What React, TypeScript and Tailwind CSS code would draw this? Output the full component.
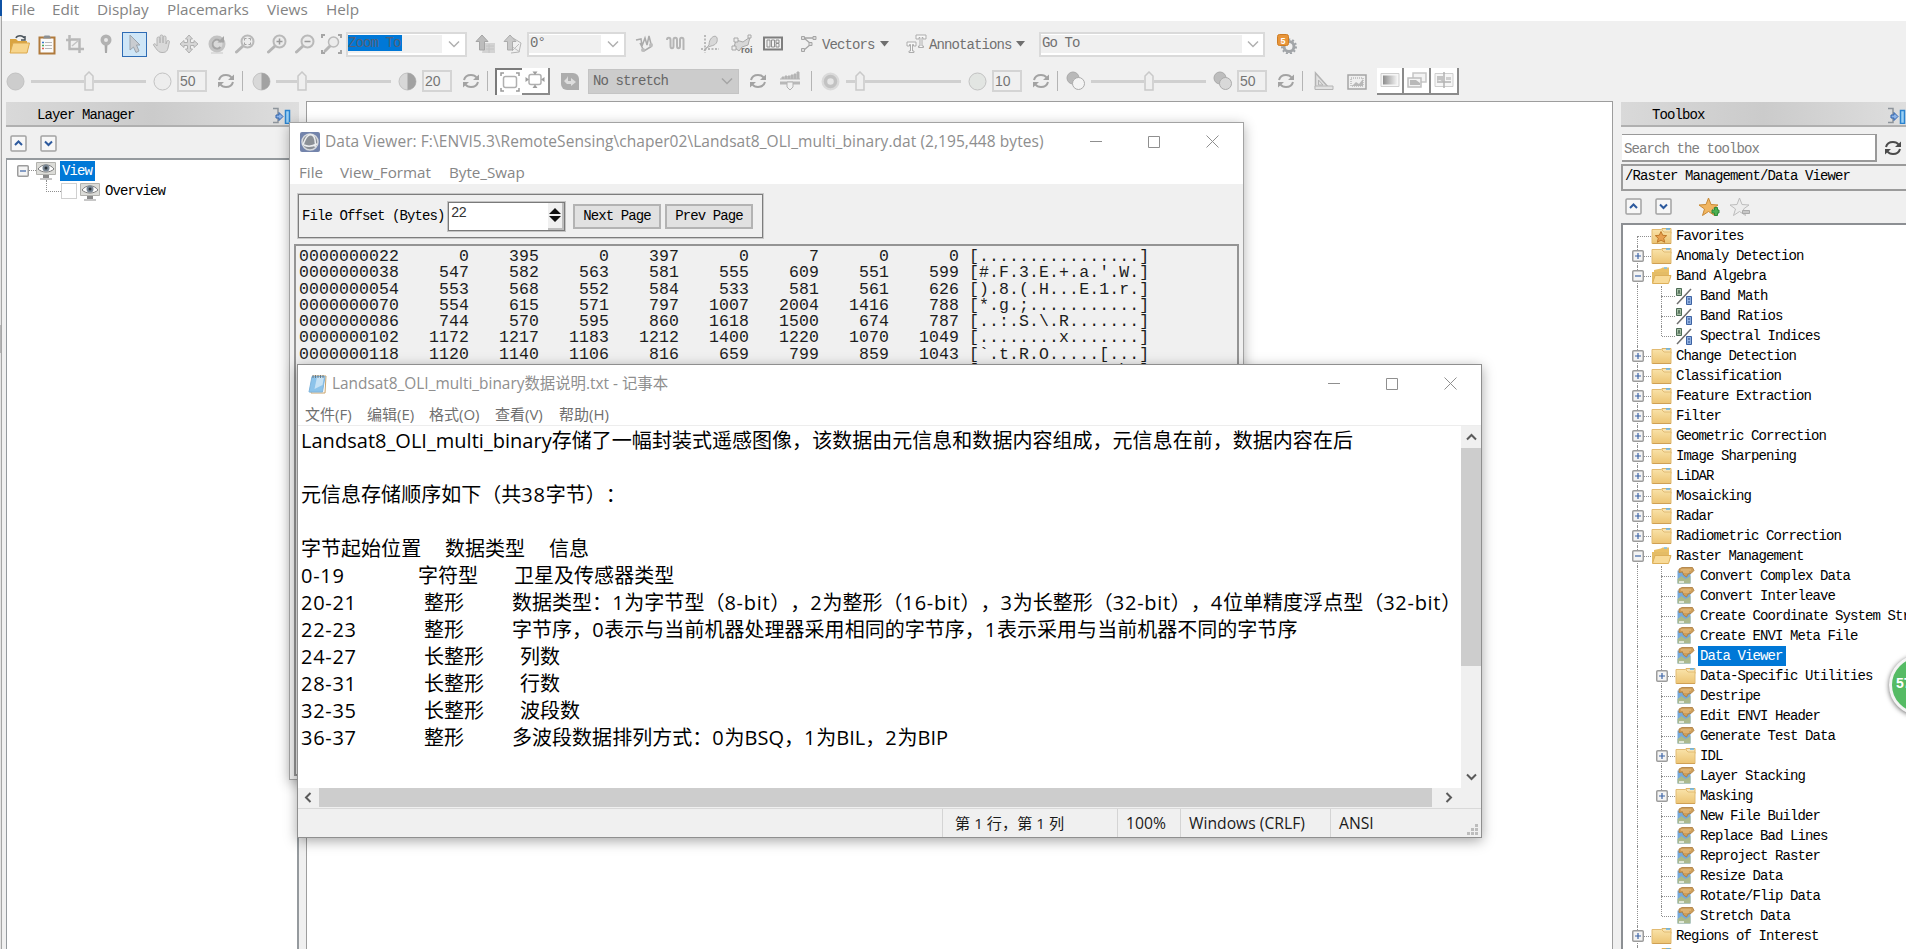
import type { ReactNode } from "react";

// SimSun-style fixed pitch text: every half-width cell is 7.5px
const MONO = "font-['Liberation_Mono',monospace] text-[14px] tracking-[-0.9px] whitespace-pre";
const UI = "font-['Open_Sans','Noto_Sans_CJK_SC',sans-serif] whitespace-pre";

const DUMP = [
  "0000000022      0    395      0    397      0      7      0      0 [................]",
  "0000000038    547    582    563    581    555    609    551    599 [#.F.3.E.+.a.'.W.]",
  "0000000054    553    568    552    584    533    581    561    626 [).8.(.H...E.1.r.]",
  "0000000070    554    615    571    797   1007   2004   1416    788 [*.g.;...........]",
  "0000000086    744    570    595    860   1618   1500    674    787 [..:.S.\\.R.......]",
  "0000000102   1172   1217   1183   1212   1400   1220   1070   1049 [........x.......]",
  "0000000118   1120   1140   1106    816    659    799    859   1043 [`.t.R.O.....[...]",
  "0000000134   1118   1187   1203   1174   1024   1080   1101   1109 [.....O........h.]",
];

type Kind = "fav" | "folder" | "open" | "band" | "tool";
type Node = { label: string; kind: Kind; child?: boolean; last?: boolean; selected?: boolean };

const TREE: Node[] = [
  { label: "Favorites", kind: "fav" },
  { label: "Anomaly Detection", kind: "folder" },
  { label: "Band Algebra", kind: "open" },
  { label: "Band Math", kind: "band", child: true },
  { label: "Band Ratios", kind: "band", child: true },
  { label: "Spectral Indices", kind: "band", child: true, last: true },
  { label: "Change Detection", kind: "folder" },
  { label: "Classification", kind: "folder" },
  { label: "Feature Extraction", kind: "folder" },
  { label: "Filter", kind: "folder" },
  { label: "Geometric Correction", kind: "folder" },
  { label: "Image Sharpening", kind: "folder" },
  { label: "LiDAR", kind: "folder" },
  { label: "Mosaicking", kind: "folder" },
  { label: "Radar", kind: "folder" },
  { label: "Radiometric Correction", kind: "folder" },
  { label: "Raster Management", kind: "open" },
  { label: "Convert Complex Data", kind: "tool", child: true },
  { label: "Convert Interleave", kind: "tool", child: true },
  { label: "Create Coordinate System String", kind: "tool", child: true },
  { label: "Create ENVI Meta File", kind: "tool", child: true },
  { label: "Data Viewer", kind: "tool", child: true, selected: true },
  { label: "Data-Specific Utilities", kind: "folder", child: true },
  { label: "Destripe", kind: "tool", child: true },
  { label: "Edit ENVI Header", kind: "tool", child: true },
  { label: "Generate Test Data", kind: "tool", child: true },
  { label: "IDL", kind: "folder", child: true },
  { label: "Layer Stacking", kind: "tool", child: true },
  { label: "Masking", kind: "folder", child: true },
  { label: "New File Builder", kind: "tool", child: true },
  { label: "Replace Bad Lines", kind: "tool", child: true },
  { label: "Reproject Raster", kind: "tool", child: true },
  { label: "Resize Data", kind: "tool", child: true },
  { label: "Rotate/Flip Data", kind: "tool", child: true },
  { label: "Stretch Data", kind: "tool", child: true, last: true },
  { label: "Regions of Interest", kind: "folder" },
  { label: "", kind: "folder" },
];

function Ico({ className = "", w = 20, h = 20, children }: { className?: string; w?: number; h?: number; children: ReactNode }) {
  return (
    <svg className={`shrink-0 ${className}`} width={w} height={h} viewBox={`0 0 ${w} ${h}`} fill="none">
      {children}
    </svg>
  );
}

/* ---------- small shared drawings ---------- */

function Refresh({ className = "", color = "#a3a3a3" }: { className?: string; color?: string }) {
  return (
    <Ico className={className} w={18} h={16}>
      <path d="M2 7C3 3 6 2 9 2c3 0 4.500 1 5.500 2.500" stroke={color} strokeWidth="2" />
      <path d="M17 1.500V7h-6z" fill={color} />
      <path d="M16 9c-1 4-4 5-7 5-3 0-4.500-1-5.500-2.500" stroke={color} strokeWidth="2" />
      <path d="M1 14.500V9h6z" fill={color} />
    </Ico>
  );
}

function Chevron({ className = "", color = "#b0b0b0" }: { className?: string; color?: string }) {
  return (
    <Ico className={className} w={12} h={8}>
      <path d="M1 1.500l5 5 5-5" stroke={color} strokeWidth="1.500" />
    </Ico>
  );
}

function Sep({ className = "" }: { className?: string }) {
  return <div className={`h-5 w-px shrink-0 bg-[#b4b4b4] ${className}`} />;
}

function Mag({ className = "", children }: { className?: string; children?: ReactNode }) {
  return (
    <Ico className={className}>
      <path d="M8 12l-6.500 6" stroke="#b5b5b5" strokeWidth="3" strokeLinecap="round" />
      <circle cx="12.500" cy="7.500" r="6" fill="#ececec" stroke="#b9b9b9" strokeWidth="2" />
      {children}
    </Ico>
  );
}

function Slider({ className = "", lead }: { className?: string; lead: string }) {
  return (
    <div className={`flex h-[22px] w-[115px] shrink-0 items-center ${className}`}>
      <div className={`h-[3px] bg-[#d0d0d0] ${lead}`} />
      <Ico w={10} h={20}>
        <path d="M1 5l4-4 4 4v14H1z" fill="#efefef" stroke="#c9c9c9" strokeWidth="1.500" />
      </Ico>
      <div className="h-[3px] flex-1 bg-[#d0d0d0]" />
    </div>
  );
}

function NumBox({ className = "", value }: { className?: string; value: string }) {
  return (
    <div className={`flex h-[22px] w-[30px] shrink-0 items-center border-2 border-[#d4d4d4] bg-[#f0f0f0] pt-px pl-px font-['Liberation_Sans',sans-serif] text-[14px] text-[#757575] ${className}`}>
      {value}
    </div>
  );
}

function Dot({ className = "", fill, half }: { className?: string; fill: string; half?: string }) {
  return (
    <Ico className={className} w={19} h={19}>
      <circle cx="9.500" cy="9.500" r="8.500" fill={fill} stroke="#c2c2c2" />
      {half && <path d={half} fill="#a2a2a2" />}
    </Ico>
  );
}

function Combo({ className = "", fieldClass, children }: { className?: string; fieldClass: string; children: ReactNode }) {
  return (
    <div className={`flex h-[25px] shrink-0 items-center border-2 border-[#dadada] bg-white ${className}`}>
      <div className={`h-[18px] bg-[#f0f0f0] leading-[16px] text-[#717171] ${MONO} ${fieldClass}`}>{children}</div>
      <div className="flex flex-1 justify-center">
        <Chevron />
      </div>
    </div>
  );
}

/* ---------- toolbars ---------- */

function MainToolbar() {
  return (
    <div className="flex h-[46px] items-center">
      <Ico className="ml-[7px]" w={21}>
        <path d="M7 4c1-3 7-3 8 0m1-2v4h-4" stroke="#4a545c" strokeWidth="1.500" />
        <path d="M1 5h6l2 2h9v12H1z" fill="#d9a441" />
        <path d="M4 9h16.500L18 19H1z" fill="#f7d58c" stroke="#dba84c" />
      </Ico>
      <Ico className="ml-2" w={18} h={21}>
        <path d="M1.500 3.500h15v16h-15z" fill="#fbfbfb" stroke="#b07a3c" strokeWidth="2" />
        <path d="M5 4.500l1.500-3h5l1.500 3z" fill="#8a8f94" />
        <path d="M7 8.500h7M7 11.500h7M7 14.500h7" stroke="#b9b9b9" />
        <path d="M4 8.500h2" stroke="#3a78c8" strokeWidth="1.500" />
        <path d="M4 11.500h2" stroke="#4aa65a" strokeWidth="1.500" />
        <path d="M4 14.500h2" stroke="#e06050" strokeWidth="1.500" />
      </Ico>
      <Ico className="ml-[9px]">
        <path d="M1 6h5M4.500 1v14H19M6 5.500h8.500V19" stroke="#b8b8b8" strokeWidth="2.500" />
        <path d="M7 12l7-6" stroke="#c4c4c4" strokeWidth="1.500" />
      </Ico>
      <Ico className="ml-[14px]" w={14}>
        <path d="M5.500 10h3L8 19H6z" fill="#a8a8a8" />
        <circle cx="7" cy="6" r="5.500" fill="#b2b2b2" />
        <circle cx="7" cy="6" r="2" fill="#e8e8e8" />
      </Ico>
      <div className="ml-[9px] flex h-[25px] w-[25px] shrink-0 items-center justify-center border border-[#2e6cb5] bg-[#cfe6f7]">
        <Ico w={14}>
          <path d="M2 1l10 10H8.500l2.500 6-3 1.500L5.500 13 2 16z" fill="#c9ccd0" stroke="#9aa3ab" />
        </Ico>
      </div>
      <Ico className="ml-[5px]" w={19}>
        <path d="M5 12V4.500a1.500 1.500 0 013 0V9 2.500a1.500 1.500 0 013 0V9 3.500a1.500 1.500 0 013 0V10l1-3a1.500 1.500 0 012.500.5L16 14c-1 4-3 4.500-6 4.500S6 17 4 14.500L1.500 11c0-2 2-1.500 3.500 1z" fill="#d9d9d9" stroke="#b4b4b4" />
      </Ico>
      <Ico className="ml-[8px]">
        <path d="M10 1l3.500 4h-2v3.500H15v-2L19 10l-4 3.500v-2h-3.500V15h2L10 19l-3.500-4h2v-3.500H5v2L1 10l4-3.500v2h3.500V5h-2z" fill="#d6d6d6" stroke="#b0b0b0" />
      </Ico>
      <Ico className="ml-[8px]">
        <circle cx="10" cy="10" r="7" fill="#dadada" stroke="#c3c3c3" strokeWidth="3" />
        <path d="M14 8A4.500 4.500 0 1013.500 13" stroke="#a6a6a6" strokeWidth="2" />
        <path d="M17 2v6.500h-6.500z" fill="#a6a6a6" />
        <path d="M4 19h12" stroke="#c8c8c8" />
      </Ico>
      <Mag className="ml-[8px]">
        <path d="M9.500 6.500v-2h2m2 0h2v2m0 2v2h-2m-2 0h-2v-2" stroke="#a3a3a3" />
      </Mag>
      <Mag className="ml-[12px]">
        <path d="M12.500 4.500v6m-3-3h6" stroke="#9b9b9b" strokeWidth="1.500" />
      </Mag>
      <Mag className="ml-[8px]">
        <path d="M9.500 7.500h6" stroke="#9b9b9b" strokeWidth="1.500" />
      </Mag>
      <Ico className="ml-[6px]" w={21}>
        <path d="M1 4V1h3M17 1h3v3M20 16v3h-3M4 19H1v-3" stroke="#a5a5a5" strokeWidth="2" />
        <path d="M9 12l-5 5" stroke="#b5b5b5" strokeWidth="3" strokeLinecap="round" />
        <circle cx="12.500" cy="8" r="5" fill="#ececec" stroke="#b9b9b9" strokeWidth="1.500" />
      </Ico>
      <Combo className="ml-[4px] w-[121px]" fieldClass="w-[94px]">
        <span className="inline-block h-[16px] w-[54px] bg-[#0078d7] align-top leading-[16px] text-[#51617a]">Zoom To</span>
      </Combo>
      <Ico className="ml-[8px]">
        <path d="M9 9h11v10H7z" fill="#d3d3d3" />
        <path d="M7 1l6 6.500H9.500V16h-5V7.500H1z" fill="#bcbcbc" stroke="#a5a5a5" />
        <path d="M11 12h8m-8 3h8m-5-5v9" stroke="#c4c4c4" />
      </Ico>
      <Ico className="ml-[8px]">
        <path d="M10 4l8 5-2 9-8 1" stroke="#b5b5b5" />
        <path d="M9 17l7-7m-8 2l9 6" stroke="#bdbdbd" />
        <path d="M7 1l6 6.500H9.500V16h-5V7.500H1z" fill="#c9c9c9" stroke="#acacac" />
      </Ico>
      <Combo className="ml-[4px] w-[99px]" fieldClass="w-[72px] pl-px">
        0°
      </Combo>
      <Ico className="ml-[9px]">
        <path d="M1 6l5-1 1 7 3-8 2 7 2-9 2 8M5 9l4 8 8-5" stroke="#ababab" strokeWidth="1.500" />
        <circle cx="8" cy="16" r="2" fill="#bdbdbd" />
        <circle cx="16" cy="11" r="2" fill="#bdbdbd" />
      </Ico>
      <Ico className="ml-[11px]">
        <path d="M1 6c0-3 3.500-3 3.500 0v6c0 3 3 3 3 0V6c0-3 3.500-3 3.500 0v6c0 3 3 3 3 0V6c0-3 3.500-3 3.500 0v10" stroke="#b5b5b5" strokeWidth="2" />
      </Ico>
      <Ico className="ml-[14px]">
        <path d="M5 1v18M1 15h18" stroke="#a8a8a8" strokeWidth="1.500" strokeDasharray="2 1.500" />
        <path d="M4 17C6 14 8 13 11 12c5-1 7-4 6-8s-8-1-8 7c-2 2-4 4-5 6z" fill="#d8d8d8" stroke="#b0b0b0" />
      </Ico>
      <Ico className="ml-[11px]" w={22}>
        <path d="M3 13l2-7 7 2 7-5-2 8-6 2-3 4z" fill="#d8d8d8" stroke="#a8a8a8" />
        <path d="M1 12h4v4H1zM3 4h4v4H3zM17 1h3v3h-3z" fill="#eee" stroke="#a8a8a8" />
        <text x="10" y="19" fontSize="9" fontWeight="700" fill="#6d6d6d" fontFamily="Liberation Sans">roi</text>
      </Ico>
      <Ico className="ml-[10px]">
        <path d="M1 3.500h18v12H1z" fill="#f2f2f2" stroke="#7e7e7e" strokeWidth="2" />
        <path d="M4 6h3v7H4zM8.500 6h3v7h-3zM13 6h3v3h-3zM13 9.500h3V13h-3z" stroke="#8e8e8e" />
      </Ico>
      <Ico className="ml-[17px]" w={18}>
        <path d="M3 4h11M4 4l7 6-7 6" stroke="#a5a5a5" strokeWidth="1.300" />
        <path d="M1.500 2.500h3v3h-3zM13 2.500h3v3h-3zM9 8.500h3v3H9zM1.500 14.500h3v3h-3z" fill="#dcdcdc" stroke="#a5a5a5" />
      </Ico>
      <span className={`ml-[4px] w-[53px] pt-[3px] text-[#707070] ${MONO}`}>Vectors</span>
      <Ico className="ml-[5px]" w={9} h={6}>
        <path d="M0 0h9L4.500 5.500z" fill="#6f6f6f" />
      </Ico>
      <Ico className="ml-[17px]" w={21}>
        <path d="M10 1h10v4h-3V3.500h-1V12h1.500v1.500h-5V12H14V3.500h-1V5h-3z" fill="#f8f8f8" stroke="#adadad" />
        <path d="M1 8h9v4H7.500v-1.500H6.500V17H8v1.500H3V17h1.500v-6.500h-1V12H1z" fill="#f8f8f8" stroke="#adadad" />
      </Ico>
      <span className={`ml-[2px] w-[83px] pt-[3px] text-[#707070] ${MONO}`}>Annotations</span>
      <Ico className="ml-[4px]" w={9} h={6}>
        <path d="M0 0h9L4.500 5.500z" fill="#6f6f6f" />
      </Ico>
      <Combo className="ml-[14px] w-[226px]" fieldClass="w-[201px] pl-px">
        Go To
      </Combo>
      <Ico className="ml-[12px]">
        <circle cx="12" cy="12.500" r="5" stroke="#a2a5a8" strokeWidth="3" />
        <circle cx="12" cy="12.500" r="7" stroke="#9ea2a6" strokeWidth="2" strokeDasharray="2 2" />
        <rect x="0.500" y="0.500" width="11" height="11" rx="2" fill="#e8953a" stroke="#cf7c22" />
        <text x="3.500" y="9.500" fontSize="9" fontWeight="700" fill="#fff" fontFamily="Liberation Sans">5</text>
      </Ico>
    </div>
  );
}

function DisplayToolbar() {
  return (
    <div className="flex h-[28px] items-center">
      <Dot className="ml-[4px]" fill="#cdcdcd" />
      <Slider className="ml-[6px]" lead="w-[53px]" />
      <Dot className="ml-[7px]" fill="#ededed" />
      <NumBox className="ml-[5px]" value="50" />
      <Refresh className="ml-[10px]" />
      <Sep className="ml-[7px]" />
      <Dot className="ml-[9px]" fill="#d8d8d8" half="M9.500 1a8.500 8.500 0 010 17z" />
      <Slider className="ml-[5px]" lead="w-[21px]" />
      <Dot className="ml-[7px]" fill="#d8d8d8" half="M9.500 1a8.500 8.500 0 010 17z" />
      <NumBox className="ml-[5px]" value="20" />
      <Refresh className="ml-[10px]" />
      <Sep className="ml-[7px]" />
      <div className="ml-[7px] flex h-[27px] w-[27px] shrink-0 items-center justify-center border-t-2 border-l-2 border-[#7b7b7b] bg-white">
        <Ico>
          <path d="M1 4V1h3M16 1h3v3M19 16v3h-3M4 19H1v-3" stroke="#9a9a9a" strokeWidth="1.500" />
          <rect x="3.500" y="4.500" width="13" height="11" rx="2" stroke="#b0b0b0" strokeWidth="1.500" />
        </Ico>
      </div>
      <div className="flex h-[27px] w-[28px] shrink-0 items-center justify-center border-r-2 border-b-2 border-[#8b8b8b] bg-white">
        <Ico>
          <rect x="4" y="4.500" width="12" height="10" rx="2" stroke="#b0b0b0" strokeWidth="1.500" />
          <path d="M10 5L7.500 1.500h5zM10 14.500L7.500 18h5zM4 9.500L.500 7v5zM16 9.500l3.500-2.500v5z" fill="#9d9d9d" />
        </Ico>
      </div>
      <Ico className="ml-[10px]">
        <path d="M1 2h12a6 6 0 016 6v11H7a6 6 0 01-6-6z" fill="#adadad" />
        <path d="M8 5v5h3V7l5 4-5 4v-2H7l-3-3 3-3z" fill="#dedede" />
      </Ico>
      <div className="ml-[8px] flex h-[25px] w-[151px] shrink-0 items-center justify-between border border-[#c4c4c4] bg-[#cccccc] pr-[5px] pl-[4px]">
        <span className={`text-[#666] ${MONO}`}>No stretch</span>
        <Chevron color="#a5a5a5" />
      </div>
      <Refresh className="ml-[10px]" />
      <Ico className="ml-[12px]" w={22}>
        <path d="M1 8h20M3 8V6h2v2m1 0V5h2v3m1 0V5h2v3m1 0V4h2v4m1 0V3h2v5m1 0V1h2v7" fill="#b4b4b4" stroke="#b4b4b4" />
        <path d="M1 12h20" stroke="#b8b8b8" strokeWidth="3" />
        <path d="M8 11h6v5l-3 3-3-3z" fill="#f1f1f1" stroke="#b2b2b2" />
      </Ico>
      <Sep className="ml-[10px]" />
      <Ico className="ml-[9px]" w={19} h={19}>
        <circle cx="9.500" cy="9.500" r="7.500" stroke="#dadada" strokeWidth="3" />
        <circle cx="9.500" cy="9.500" r="5" stroke="#c2c2c2" strokeWidth="3.500" fill="#e6e6e6" />
      </Ico>
      <Slider className="ml-[6px]" lead="w-[9px]" />
      <Dot className="ml-[7px]" fill="#e2e5e2" />
      <NumBox className="ml-[5px]" value="10" />
      <Refresh className="ml-[10px]" />
      <Sep className="ml-[7px]" />
      <Ico className="ml-[8px]">
        <circle cx="7" cy="7" r="6" fill="#b9b9b9" stroke="#a9a9a9" />
        <circle cx="12.500" cy="12.500" r="6" fill="#f4f4f4" stroke="#ababab" />
      </Ico>
      <Slider className="ml-[5px]" lead="w-[53px]" />
      <Ico className="ml-[7px]">
        <circle cx="7" cy="7" r="6" fill="#bdbdbd" stroke="#a9a9a9" />
        <circle cx="12.500" cy="12.500" r="6" fill="#d8d8d8" stroke="#ababab" />
      </Ico>
      <NumBox className="ml-[4px]" value="50" />
      <Refresh className="ml-[10px]" />
      <Sep className="ml-[7px]" />
      <Ico className="ml-[11px]">
        <path d="M1.500 2v15H15z" fill="#e2e2e2" stroke="#b4b4b4" strokeWidth="1.500" />
        <path d="M4.500 9v5H9z" stroke="#b4b4b4" />
        <path d="M1 15h18v3.500H1z" fill="#e2e2e2" stroke="#b4b4b4" />
      </Ico>
      <Ico className="ml-[13px]">
        <path d="M1 4h18v14H1z" fill="#efefef" stroke="#a5a5a5" strokeWidth="1.500" />
        <path d="M4 7h12v8H4z" stroke="#9e9e9e" strokeDasharray="1 1" />
        <path d="M5 15l4-4 3 2 4-5v7z" fill="#b8b8b8" />
      </Ico>
      <div className="ml-[10px] flex h-[27px] w-[82px] shrink-0 bg-white">
        <div className="flex w-[27px] items-center justify-center border-r-2 border-b-2 border-[#8b8b8b]">
          <Ico>
            <defs>
              <linearGradient id="fade">
                <stop stopColor="#8d8d8d" />
                <stop offset="1" stopColor="#f2f2f2" />
              </linearGradient>
            </defs>
            <path d="M1 3.500h18v13H1z" stroke="#cfcfcf" fill="#f6f6f6" />
            <path d="M3 5.500h14v9H3z" fill="url(#fade)" />
          </Ico>
        </div>
        <div className="flex w-[27px] items-center justify-center border-r-2 border-b-2 border-[#8b8b8b]">
          <Ico>
            <path d="M6 3h13v9H6z" fill="#f3f3f3" stroke="#c6c6c6" strokeWidth="1.500" />
            <path d="M1 8h13v9H1z" fill="#f3f3f3" stroke="#bfbfbf" strokeWidth="1.500" />
            <path d="M3 10h6l4 3v2H3z" fill="#b9b9b9" />
          </Ico>
        </div>
        <div className="flex w-[28px] items-center justify-center border-r-2 border-b-2 border-[#8b8b8b]">
          <Ico>
            <path d="M1 3.500h18v13H1z" stroke="#cfcfcf" fill="#f6f6f6" />
            <path d="M3 6h6v6l-3-2-3 1z" fill="#c4c4c4" />
            <path d="M10 2v16M3 12h14" stroke="#b3b3b3" strokeWidth="1.500" />
            <path d="M12 7h5v3h-5z" fill="#cfcfcf" />
          </Ico>
        </div>
      </div>
    </div>
  );
}

/* ---------- side panels ---------- */

function PanelHeader({ title, className }: { title: string; className: string }) {
  return (
    <div className={`flex h-[25px] shrink-0 items-center border-b-2 border-[#b0b0b0] bg-linear-to-r from-[#d9d9d9] via-[#cbcbcb] to-[#dedede] pt-[3px] ${className}`}>
      <span className={`flex-1 text-black ${MONO}`}>{title}</span>
      <Ico w={19} h={17}>
        <path d="M1 1.500h5v14H1" stroke="#8d949b" strokeWidth="1.500" />
        <path d="M4 8h3V5.500L11 9.500l-4 4V11H4z" fill="#8db4e8" stroke="#2f62ad" />
        <path d="M13.500 3.500h4v13h-4z" fill="#9bd0f5" stroke="#2b83cf" strokeWidth="1.500" />
      </Ico>
    </div>
  );
}

function MiniButton({ down, className = "" }: { down?: boolean; className?: string }) {
  return (
    <Ico className={className} w={17} h={17}>
      <rect x="1" y="1" width="15" height="15" rx="1" fill="#f7f7f7" stroke="#a3a3a3" strokeWidth="1.500" />
      <path d={down ? "M5 6.500l3.500 3.500L12 6.500" : "M5 10l3.500-3.500L12 10"} stroke="#2d5a9e" strokeWidth="2" />
    </Ico>
  );
}

function Expander({ open }: { open?: boolean }) {
  return (
    <Ico w={12} h={12}>
      <rect x="0.750" y="0.750" width="10.500" height="10.500" rx="1" fill="#f4f4f4" stroke="#9c9c9c" strokeWidth="1.500" />
      <path d={open ? "M3 6h6" : "M3 6h6M6 3v6"} stroke="#3b63a5" strokeWidth="1.200" />
    </Ico>
  );
}

function EyeMonitor() {
  return (
    <Ico w={20} h={19}>
      <path d="M.500 1.500h19v12H.500z" fill="#dcdcd8" stroke="#b2b2ae" />
      <path d="M2 8c4-5.500 12-5.500 16 0-4 4-12 4-16 0z" fill="#fff" stroke="#7c7c7c" />
      <circle cx="10" cy="7" r="3.500" fill="#7a8794" />
      <circle cx="10" cy="7" r="1.500" fill="#2d3338" />
      <path d="M7 14h6v3H7z" fill="#8a8a8a" />
      <path d="M4 18h12" stroke="#b5b5b5" strokeWidth="1.500" />
    </Ico>
  );
}

function NodeIcon({ kind }: { kind: Kind }) {
  if (kind === "band") {
    return (
      <Ico w={20} h={18}>
        <path d="M1.500 1.500h5v7h-5z" fill="#a9c2a9" stroke="#4c6b55" />
        <path d="M3 7l1-4 1 4" stroke="#3f5c48" strokeWidth=".8" />
        <path d="M16 2L2 17" stroke="#6d6d6d" strokeWidth="1.500" />
        <path d="M11.500 9.500h5v8h-5z" fill="#8fb0e0" stroke="#3d62a3" />
        <path d="M13 12h2m-2 3h2" stroke="#2f4f8c" />
      </Ico>
    );
  }
  if (kind === "tool") {
    return (
      <Ico w={20} h={18}>
        <path d="M2.500 3.500h13v13h-13z" fill="#74a9dc" />
        <path d="M2.500 16.500V12l4-3 4 3 5-3v7.500z" fill="#a9b98e" />
        <path d="M4 14h5v2H4z" fill="#dfe7d8" />
        <path d="M4 2l3-1.500h10.500l1.500 3-3 3-3 .500-1.500 3-3-2-1-3L4 5.500z" fill="#cf9f5b" stroke="#a87a3b" strokeWidth=".8" />
        <path d="M6 3h10M8 5h6" stroke="#e7c48b" />
      </Ico>
    );
  }
  if (kind === "open") {
    return (
      <Ico w={21} h={18}>
        <path d="M3 3l7-1.500 1.500-1H18V9H3z" fill="#e9c067" />
        <path d="M13 1h3" stroke="#7bc1ee" strokeWidth="1.500" />
        <path d="M1 5h16v11H1z" fill="#e4bc66" />
        <path d="M4 8.500h16L17.500 16.500H1.500z" fill="#f8da97" stroke="#ddb05a" />
      </Ico>
    );
  }
  return (
    <Ico w={21} h={18}>
      <defs>
        <linearGradient id="manila" x1="0" y1="0" x2="0" y2="1">
          <stop stopColor="#f9e2a8" />
          <stop offset="1" stopColor="#ecc474" />
        </linearGradient>
      </defs>
      <path d="M11 1.500h9v5h-9z" fill="#f6e3b4" stroke="#ddb262" />
      <path d="M15 2h4" stroke="#5cb2ee" strokeWidth="1.500" />
      <path d="M1 2.500h9.500L13 5h7v11.500H1z" fill="url(#manila)" stroke="#e2bb72" />
      <path d="M1.500 16.500h18.500" stroke="#cfa054" />
      {kind === "fav" && <path d="M10 4.500l1.700 3.800 4 .3-3 2.700 1 4-3.700-2.200-3.700 2.200 1-4-3-2.700 4-.3z" fill="#e8a050" stroke="#c07a2a" />}
    </Ico>
  );
}

function TreeRow({ node, first }: { node: Node; first: boolean }) {
  const hasBox = node.kind === "folder" || node.kind === "open";
  const dots = "border-dotted border-[#8f8f8f]";
  return (
    <div className="flex h-5 shrink-0 items-stretch">
      {node.child && (
        <div className="flex w-[24px] shrink-0 pl-[14px]">
          <div className={`border-l ${dots}`} />
        </div>
      )}
      {/* rail above and below the expander */}
      <div className="flex w-[15px] shrink-0 flex-col items-end">
        <div className={`h-[10px] ${first ? "" : `border-l ${dots}`}`} />
        <div className={`h-[10px] ${node.last ? "" : `border-l ${dots}`}`} />
      </div>
      <div className="-ml-[6px] flex w-[19px] shrink-0 items-center">
        {hasBox ? <Expander open={node.kind === "open"} /> : <div className="w-[6px]" />}
        <div className={`h-0 flex-1 border-t ${dots}`} />
      </div>
      <div className="flex w-[23px] shrink-0 items-center">
        <NodeIcon kind={node.kind} />
      </div>
      <span
        className={`h-5 shrink-0 pr-[3px] pl-[2px] leading-[21px] ${MONO} ${node.selected ? "bg-[#0078d7] text-white" : "text-black"}`}
      >
        {node.label}
      </span>
    </div>
  );
}

function LayerManager() {
  return (
    <div className="flex w-[293px] shrink-0 flex-col">
      <PanelHeader title="Layer Manager" className="pr-[8px] pl-[31px]" />
      <div className="flex h-[31px] items-center pt-[2px] pl-[4px]">
        <MiniButton />
        <MiniButton down className="ml-[13px]" />
      </div>
      <div className="flex-1 border-t-2 border-r-2 border-l border-[#959a9e] bg-white">
        <div className="flex h-5 items-center pt-px pl-[10px]">
          <Expander open />
          <div className="h-0 w-[7px] border-t border-dotted border-[#8f8f8f]" />
          <EyeMonitor />
          <span className={`ml-[4px] h-5 w-[35px] bg-[#0078d7] pl-[2px] leading-[20px] text-white ${MONO}`}>View</span>
        </div>
        <div className="flex h-[21px] items-center pt-px pl-[39px]">
          <div className="-mt-[10px] h-[12px] w-[15px] border-b border-l border-dotted border-[#8f8f8f]" />
          <div className="h-4 w-4 border border-[#d0d0d0] bg-white" />
          <div className="ml-[3px]">
            <EyeMonitor />
          </div>
          <span className={`ml-[5px] text-black ${MONO}`}>Overview</span>
        </div>
      </div>
    </div>
  );
}

function Toolbox() {
  return (
    <div className="flex w-[285px] shrink-0 flex-col">
      <PanelHeader title="Toolbox" className="pl-[31px]" />
      <div className="mt-[7px] flex h-[28px] items-center">
        <div className={`ml-px flex h-[28px] w-[255px] shrink-0 items-center border-t border-r-2 border-b-2 border-[#999] bg-white pt-[3px] pl-[2px] text-[#808080] ${MONO}`}>
          Search the toolbox
        </div>
        <Refresh className="ml-[7px]" color="#4b4b4b" />
      </div>
      <div className={`mt-[2px] flex h-[27px] items-center border-2 border-r-0 border-[#9b9b9b] pb-[3px] pl-[2px] text-black ${MONO}`}>
        /Raster Management/Data Viewer
      </div>
      <div className="flex h-[31px] items-center pl-[4px]">
        <MiniButton />
        <MiniButton down className="ml-[13px]" />
        <Ico className="ml-[27px]" w={21}>
          <path d="M9.500 1l2.500 6.500 7 .5-5.500 4 2 6.500-6-4-6 4 2-6.500L0 8l7-.5z" fill="#f0b561" stroke="#c98a35" />
          <path d="M13 13h2.500v-2.500h3V13H20v3h-1.500v2.500h-3V16H13z" fill="#4caf50" stroke="#2f8a3a" />
        </Ico>
        <Ico className="ml-[10px]" w={21}>
          <path d="M9.500 1l2.500 6.500 7 .5-5.500 4 2 6.500-6-4-6 4 2-6.500L0 8l7-.5z" fill="#ededed" stroke="#bdbdbd" />
          <path d="M12.500 13.500h7v3h-7z" fill="#c7c7c7" stroke="#a9a9a9" />
        </Ico>
      </div>
      <div className="mt-px flex min-h-0 flex-1 flex-col overflow-hidden border-t-2 border-l-2 border-[#8c8f93] bg-white pt-px">
        {TREE.map((node, i) => (
          <TreeRow key={i} node={node} first={i === 0} />
        ))}
      </div>
    </div>
  );
}

/* ---------- floating windows ---------- */

function WindowControls() {
  return (
    <div className="flex items-center gap-[46px]">
      <Ico w={12} h={12}>
        <path d="M0 5.500h12" stroke="#8f8f8f" />
      </Ico>
      <Ico w={12} h={12}>
        <path d="M.500.500h11v11H.500z" stroke="#8f8f8f" />
      </Ico>
      <Ico w={13} h={13}>
        <path d="M.500.500l12 12M12.500.500l-12 12" stroke="#8f8f8f" />
      </Ico>
    </div>
  );
}

function DataViewer() {
  return (
    <div className="absolute top-[122px] left-[289px] flex h-[658px] w-[955px] flex-col border border-[#a3a3a3] bg-[#f0f0f0] shadow-[0_3px_12px_rgba(0,0,0,0.3)]">
      <div className="flex h-[37px] items-center bg-white pr-[24px] pl-[10px]">
        <Ico w={20}>
          <rect width="20" height="20" rx="2" fill="#7384ab" />
          <circle cx="10" cy="10" r="8" fill="#8b9096" stroke="#d7dade" strokeWidth="1.500" />
          <path d="M3 13C6 4 9 2 12 3s4 8 3 12M4 13c4 2 9 1 13-1" stroke="#eceef0" strokeWidth="1.500" />
        </Ico>
        <span className={`ml-[5px] flex-1 text-[15.500px] tracking-[0.06px] text-[#8e8e8e] ${UI}`}>
          Data Viewer: F:\ENVI5.3\RemoteSensing\chaper02\Landsat8_OLI_multi_binary.dat (2,195,448 bytes)
        </span>
        <WindowControls />
      </div>
      <div className={`flex h-[24px] items-center bg-white text-[15.200px] text-[#868686] ${UI}`}>
        <span className="w-[50px] pl-[9px]">File</span>
        <span className="w-[109px]">View_Format</span>
        <span>Byte_Swap</span>
      </div>
      <div className="mt-[10px] ml-[8px] flex h-[44px] w-[465px] items-center border border-[#7d7d7d] pl-[3px] outline outline-[#c9c9c9]">
        <span className={`w-[146px] text-black ${MONO}`}>File Offset (Bytes)</span>
        <div className="flex h-[29px] w-[117px] border border-[#7a7a7a] bg-white outline outline-[#c4c4c4]">
          <span className={`flex-1 pl-[2px] leading-[20px] text-[#333] ${MONO}`}>22</span>
          <div className="flex w-[16px] items-center justify-center border-r-2 border-b-2 border-[#bdbdbd] bg-[#f0f0f0]">
            <Ico w={12} h={14}>
              <path d="M0 6l6-6 6 6zM0 8h12l-6 6z" fill="#111" />
            </Ico>
          </div>
        </div>
        <div className={`ml-[8px] flex h-[25px] w-[88px] items-center justify-center border-2 border-[#b3b3b3] bg-[#e1e1e1] text-black ${MONO}`}>Next Page</div>
        <div className={`ml-[4px] flex h-[25px] w-[88px] items-center justify-center border-2 border-[#b3b3b3] bg-[#e1e1e1] text-black ${MONO}`}>Prev Page</div>
      </div>
      <div className="mt-[6px] mr-[4px] mb-[3px] ml-[4px] flex-1 overflow-hidden border-2 border-[#949494] bg-[#f0f0f0] pt-[3px] pl-[3px]">
        {DUMP.map((line) => (
          <div key={line} className="h-[16.27px] font-['Liberation_Mono',monospace] text-[16.500px] leading-[16px] tracking-[0.1px] whitespace-pre text-[#1c1c1c]">
            {line}
          </div>
        ))}
      </div>
    </div>
  );
}

// Numbers are set a little wider than the surrounding text
function Note({ text }: { text: string }) {
  return (
    <>
      {text.split(/(\d[\d-]*(?:bit)?)/).map((part, i) =>
        i % 2 ? (
          <span key={i} className="tracking-[0.7px]">{part}</span>
        ) : (
          part
        ),
      )}
    </>
  );
}

// Columns of the notepad text; widths follow the runs of spaces in the file
function NoteRow({ a, b, c, aw, bw }: { a: string; b: string; c: string; aw: string; bw: string }) {
  return (
    <div className="flex h-[27px]">
      <span className={`shrink-0 ${aw}`}><Note text={a} /></span>
      <span className={`shrink-0 ${bw}`}>{b}</span>
      <span className="shrink-0"><Note text={c} /></span>
    </div>
  );
}

function Notepad() {
  return (
    <div className="absolute top-[364px] left-[297px] flex h-[474px] w-[1185px] flex-col border border-[#8f8f8f] bg-white shadow-[0_3px_12px_rgba(0,0,0,0.35)]">
      <div className="flex h-[37px] items-center pr-[24px] pl-[10px]">
        <Ico>
          <path d="M5 2h13l-1 17H3z" fill="#fff" stroke="#c9a36a" />
          <path d="M4 2.500h13L14.500 18H1z" fill="#8cc3ea" stroke="#7fb4dc" />
          <path d="M9 3h7l-1.500 8-8 4z" fill="#c6e2f5" />
          <path d="M5 1v3m2.500-3v3M10 1v3m2.500-3v3M15 1v3" stroke="#6b7880" />
        </Ico>
        <span className={`ml-[4px] flex-1 text-[15.400px] text-[#8f8f8f] ${UI}`}>
          Landsat8_OLI_multi_binary数据说明.txt - 记事本
        </span>
        <WindowControls />
      </div>
      <div className={`flex h-[24px] shrink-0 items-center border-b border-[#ededed] pt-px pl-[7px] text-[15px] text-[#6f6f6f] ${UI}`}>
        <span className="w-[62px]">文件(F)</span>
        <span className="w-[62px]">编辑(E)</span>
        <span className="w-[66px]">格式(O)</span>
        <span className="w-[64px]">查看(V)</span>
        <span>帮助(H)</span>
      </div>
      <div className="flex h-[362px] shrink-0">
        <div className={`min-w-0 flex-1 overflow-hidden pt-[2px] pl-[3px] text-[20px] leading-[26px] tracking-[0.03px] text-black [text-spacing-trim:space-all] ${UI}`}>
          <div className="h-[54px]">Landsat8_OLI_multi_binary存储了一幅封装式遥感图像，该数据由元信息和数据内容组成，元信息在前，数据内容在后</div>
          <div className="h-[54px]"><Note text="元信息存储顺序如下（共38字节）：" /></div>
          <NoteRow a="字节起始位置" b="数据类型" c="信息" aw="w-[144px]" bw="w-[104px]" />
          <NoteRow a="0-19" b="字符型" c="卫星及传感器类型" aw="w-[117px]" bw="w-[96px]" />
          <NoteRow a="20-21" b="整形" c="数据类型：1为字节型（8-bit），2为整形（16-bit），3为长整形（32-bit），4位单精度浮点型（32-bit）" aw="w-[123px]" bw="w-[88px]" />
          <NoteRow a="22-23" b="整形" c="字节序，0表示与当前机器处理器采用相同的字节序，1表示采用与当前机器不同的字节序" aw="w-[123px]" bw="w-[88px]" />
          <NoteRow a="24-27" b="长整形" c="列数" aw="w-[123px]" bw="w-[96px]" />
          <NoteRow a="28-31" b="长整形" c="行数" aw="w-[123px]" bw="w-[96px]" />
          <NoteRow a="32-35" b="长整形" c="波段数" aw="w-[123px]" bw="w-[96px]" />
          <NoteRow a="36-37" b="整形" c="多波段数据排列方式：0为BSQ，1为BIL，2为BIP" aw="w-[123px]" bw="w-[88px]" />
        </div>
        <div className="flex w-[20px] shrink-0 flex-col items-center bg-[#f0f0f0]">
          <div className="flex h-[22px] items-center">
            <Ico w={11} h={8}>
              <path d="M1 6.500l4.500-4.500L10 6.500" stroke="#5a5a5a" strokeWidth="2" />
            </Ico>
          </div>
          <div className="h-[218px] w-full bg-[#cdcdcd]" />
          <div className="flex flex-1 items-end pb-[7px]">
            <Ico w={11} h={8}>
              <path d="M1 1.500L5.500 6 10 1.500" stroke="#5a5a5a" strokeWidth="2" />
            </Ico>
          </div>
        </div>
      </div>
      <div className="flex h-[20px] shrink-0 items-start bg-[#f0f0f0]">
        <div className="flex h-[19px] w-[21px] items-center justify-center pr-[2px]">
          <Ico w={8} h={11}>
            <path d="M6.500 1L2 5.500 6.500 10" stroke="#5a5a5a" strokeWidth="2" />
          </Ico>
        </div>
        <div className="h-[19px] w-[1113px] bg-[#cdcdcd]" />
        <div className="flex h-[19px] w-[34px] items-center justify-center">
          <Ico w={8} h={11}>
            <path d="M1.500 1L6 5.500 1.500 10" stroke="#5a5a5a" strokeWidth="2" />
          </Ico>
        </div>
      </div>
      <div className={`flex flex-1 items-stretch border-t border-[#d9d9d9] bg-[#f0f0f0] text-[15.700px] leading-[28px] text-[#1a1a1a] ${UI}`}>
        <div className="w-[645px] border-r border-[#d4d4d4]" />
        <div className="w-[175px] border-r border-[#d4d4d4] pl-[12px] text-[15.200px]">第 1 行，第 1 列</div>
        <div className="w-[63px] border-r border-[#d4d4d4] pl-[8px]">100%</div>
        <div className="w-[150px] border-r border-[#d4d4d4] pl-[8px]">Windows (CRLF)</div>
        <div className="flex-1 pl-[8px]">ANSI</div>
        <Ico className="mr-[2px] self-end" w={12} h={13}>
          <path d="M8 0h3v3H8zM4 4h3v3H4zM8 4h3v3H8zM0 8h3v3H0zM4 8h3v3H4zM8 8h3v3H8z" fill="#bdbdbd" />
        </Ico>
      </div>
    </div>
  );
}

export default function App() {
  return (
    <div className="relative flex h-[949px] w-[1906px] overflow-hidden bg-[#f0f0f0]">
      {/* sliver of the window behind */}
      <div className="flex w-[2px] shrink-0 flex-col border-r border-[#a5a5a5] bg-[#e4e4e4]">
        <div className="-mr-px h-[16px] bg-[#0f52a5]" />
        <div className="mt-[309px] h-[28px] bg-[#b5b5b5]" />
      </div>

      <div className="flex w-[1904px] shrink-0 flex-col">
        <div className={`flex h-[21px] shrink-0 items-center bg-white pb-[2px] pl-[9px] text-[15.300px] text-[#838383] ${UI}`}>
          <span className="w-[41px]">File</span>
          <span className="w-[45px]">Edit</span>
          <span className="w-[70px]">Display</span>
          <span className="w-[100px]">Placemarks</span>
          <span className="w-[59px]">Views</span>
          <span>Help</span>
        </div>
        <MainToolbar />
        <DisplayToolbar />
        <div className="mt-[6px] flex min-h-0 flex-1 pl-[4px]">
          <div className="mt-px flex">
            <LayerManager />
          </div>
          <div className="mr-[8px] ml-[7px] flex-1 border-x border-t border-[#9d9d9d] bg-white" />
          <div className="mt-px flex min-h-0">
            <Toolbox />
          </div>
        </div>
      </div>

      <DataViewer />
      <Notepad />

      {/* floating progress ball, cut by the screen edge */}
      <div className="absolute top-[655px] left-[1889px] flex h-[60px] w-[60px] items-center rounded-full border-[3px] border-[#f4f4f4] bg-[#55bb64] pb-[3px] pl-[4px] font-['Liberation_Sans',sans-serif] text-[14px] font-bold text-white shadow-[0_1px_5px_rgba(0,0,0,0.6)]">
        57
      </div>
    </div>
  );
}
